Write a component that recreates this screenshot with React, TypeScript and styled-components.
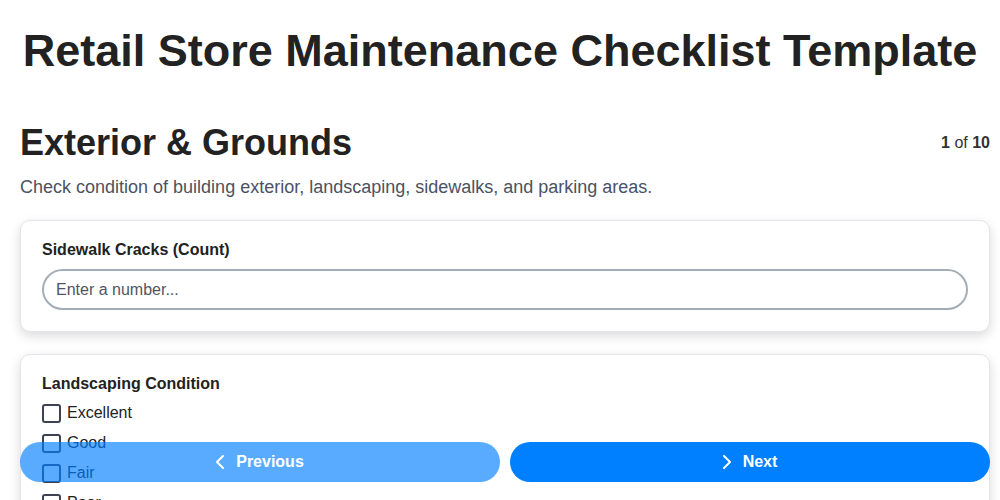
import React from "react";
import styled, { createGlobalStyle } from "styled-components";

const options = ["Excellent", "Good", "Fair", "Poor"];

const Chevron = ({ dir }: { dir: "left" | "right" }) => (
    <svg width="8" height="14" viewBox="0 0 8 14" fill="none" stroke="currentColor" strokeWidth="2" strokeLinecap="round" strokeLinejoin="round">
        {dir === "left" ? <path d="M7 1 1 7l6 6" /> : <path d="m1 1 6 6-6 6" />}
    </svg>
);

const App = () => {
    return (
        <>
            <GlobalStyle />
            <Title>Retail Store Maintenance Checklist Template</Title>
            <Main>
                <SectionHeader>
                    <SectionTitle>Exterior &amp; Grounds</SectionTitle>
                    <Progress><b>1</b> of <b>10</b></Progress>
                </SectionHeader>
                <Description>Check condition of building exterior, landscaping, sidewalks, and parking areas.</Description>

                <Card>
                    <FieldLabel htmlFor="cracks">Sidewalk Cracks (Count)</FieldLabel>
                    <TextInput id="cracks" type="number" placeholder="Enter a number..." />
                </Card>

                <Card>
                    <FieldLabel as="div">Landscaping Condition</FieldLabel>
                    <OptionList>
                        {options.map((o) => (
                            <Option key={o}>
                                <Checkbox type="checkbox" />
                                {o}
                            </Option>
                        ))}
                    </OptionList>
                </Card>
            </Main>

            <Footer>
                <NavButton disabled>
                    <Chevron dir="left" />
                    Previous
                </NavButton>
                <NavButton>
                    <Chevron dir="right" />
                    Next
                </NavButton>
            </Footer>
        </>
    );
};

/* CSS */
const GlobalStyle = createGlobalStyle`
  body {
    margin: 0;
    background: #ffffff;
    font-family: "Liberation Sans", Arial, sans-serif;
    color: #222222;
  }
`;

const Title = styled.h1`
  margin: 25px 0 45px;
  text-align: center;
  font-size: 45px;
  font-weight: bold;
  color: #222222;
`;

const Main = styled.main`
  padding: 0 10px 100px 20px;
`;

const SectionHeader = styled.div`
  display: flex;
  justify-content: space-between;
  align-items: center;
`;

const SectionTitle = styled.h2`
  margin: 0;
  font-size: 36px;
  font-weight: bold;
  color: #222222;
`;

const Progress = styled.div`
  font-size: 16px;
  color: #333333;
`;

const Description = styled.p`
  margin: 13px 0 22px;
  font-size: 18px;
  color: #4b5263;
`;

const Card = styled.section`
  background: #ffffff;
  border: 1px solid #e4e4ea;
  border-radius: 10px;
  box-shadow: 0 4px 12px rgba(0, 0, 0, 0.15);
  padding: 20px 21px 21px;
  margin-bottom: 22px;
`;

const FieldLabel = styled.label`
  display: block;
  font-size: 16px;
  font-weight: bold;
  color: #222222;
`;

const TextInput = styled.input`
  display: block;
  box-sizing: border-box;
  width: 100%;
  height: 41px;
  margin-top: 10px;
  padding: 0 12px;
  border: 2px solid #a4adb6;
  border-radius: 21px;
  font-family: "Liberation Sans", Arial, sans-serif;
  font-size: 16px;
  outline: none;

  &::placeholder {
    color: #4f5563;
  }
`;

const OptionList = styled.div`
  display: flex;
  flex-direction: column;
  gap: 10px;
  margin-top: 10px;
`;

const Option = styled.label`
  display: flex;
  align-items: center;
  gap: 6px;
  height: 20px;
  font-size: 16px;
  color: #222222;
`;

const Checkbox = styled.input`
  appearance: none;
  box-sizing: border-box;
  width: 19px;
  height: 19px;
  margin: 0;
  border: 2px solid #3c4252;
  border-radius: 3px;
  background: #ffffff;
`;

const Footer = styled.nav`
  position: fixed;
  left: 20px;
  right: 10px;
  bottom: 18px;
  display: grid;
  grid-template-columns: 1fr 1fr;
  gap: 10px;
`;

const NavButton = styled.button`
  display: flex;
  align-items: center;
  justify-content: center;
  gap: 12px;
  height: 40px;
  border: none;
  border-radius: 20px;
  background: #007fff;
  color: #ffffff;
  font-family: "Liberation Sans", Arial, sans-serif;
  font-size: 16px;
  font-weight: bold;
  cursor: pointer;

  &:disabled {
    opacity: 0.65;
    cursor: default;
  }
`;

export default App;
